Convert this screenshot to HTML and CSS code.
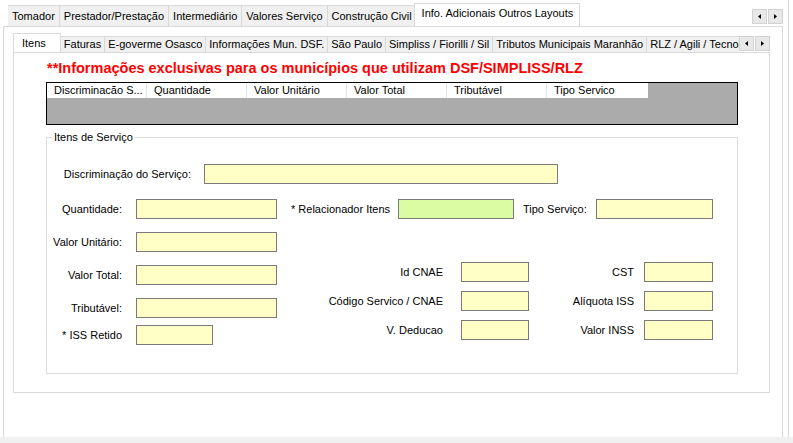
FILE: index.html
```html
<!DOCTYPE html>
<html lang="pt-BR">
<head>
  <meta charset="UTF-8">
  <title>Info. Adicionais Outros Layouts</title>
  <link rel="stylesheet" href="styles.css">
</head>
<body>
  <div class="window">
    <div class="tabbar outer-bar">
      <div class="tabs">
        <div class="tab">Tomador</div>
        <div class="tab">Prestador/Prestação</div>
        <div class="tab">Intermediário</div>
        <div class="tab">Valores Serviço</div>
        <div class="tab">Construção Civil</div>
        <div class="tab active">Info. Adicionais Outros Layouts</div>
      </div>
      <div class="scroller">
        <span class="arrow"><svg width="3" height="5" viewBox="0 0 3 5"><path d="M3 0V5L0 2.5Z" fill="#000"/></svg></span>
        <span class="arrow"><svg width="3" height="5" viewBox="0 0 3 5"><path d="M0 0V5L3 2.5Z" fill="#000"/></svg></span>
      </div>
    </div>

    <div class="outer-page">
      <div class="tabbar inner-bar">
        <div class="tabs">
          <div class="tab active">Itens</div>
          <div class="tab">Faturas</div>
          <div class="tab">E-goverme Osasco</div>
          <div class="tab">Informações Mun. DSF.</div>
          <div class="tab">São Paulo</div>
          <div class="tab">Simpliss / Fiorilli / Sil</div>
          <div class="tab">Tributos Municipais Maranhão</div>
          <div class="tab">RLZ / Agili / Tecnos</div>
        </div>
        <div class="scroller">
          <span class="arrow"><svg width="3" height="5" viewBox="0 0 3 5"><path d="M3 0V5L0 2.5Z" fill="#000"/></svg></span>
          <span class="arrow"><svg width="3" height="5" viewBox="0 0 3 5"><path d="M0 0V5L3 2.5Z" fill="#000"/></svg></span>
        </div>
      </div>

      <div class="inner-page">
        <div class="notice">**Informações exclusivas para os municípios que utilizam DSF/SIMPLISS/RLZ</div>

        <div class="grid">
          <div class="grid-head">
            <div class="cell">Discriminacão S...</div>
            <div class="cell">Quantidade</div>
            <div class="cell">Valor Unitário</div>
            <div class="cell">Valor Total</div>
            <div class="cell">Tributável</div>
            <div class="cell">Tipo Servico</div>
          </div>
        </div>

        <fieldset class="group">
          <legend>Itens de Serviço</legend>

          <div class="field row-discrim">
            <label class="lbl-discrim">Discriminação do Serviço:</label>
            <input class="in-discrim" type="text">
          </div>

          <div class="row-two">
            <div class="field">
              <label class="lbl-left">Quantidade:</label>
              <input class="in-left" type="text">
            </div>
            <div class="field">
              <label class="lbl-rel">* Relacionador Itens</label>
              <input class="in-rel" type="text">
            </div>
            <div class="field">
              <label class="lbl-tipo">Tipo Serviço:</label>
              <input class="in-tipo" type="text">
            </div>
          </div>

          <div class="cols">
            <div class="col col-left">
              <div class="field">
                <label class="lbl-left">Valor Unitário:</label>
                <input class="in-left" type="text">
              </div>
              <div class="field">
                <label class="lbl-left">Valor Total:</label>
                <input class="in-left" type="text">
              </div>
              <div class="field">
                <label class="lbl-left">Tributável:</label>
                <input class="in-left" type="text">
              </div>
              <div class="field iss">
                <label class="lbl-left">* ISS Retido</label>
                <input class="in-small" type="text">
              </div>
            </div>

            <div class="col col-mid">
              <div class="field">
                <label class="lbl-mid">Id CNAE</label>
                <input class="in-mid" type="text">
              </div>
              <div class="field">
                <label class="lbl-mid">Código Servico / CNAE</label>
                <input class="in-mid" type="text">
              </div>
              <div class="field">
                <label class="lbl-mid">V. Deducao</label>
                <input class="in-mid" type="text">
              </div>
            </div>

            <div class="col col-right">
              <div class="field">
                <label class="lbl-right">CST</label>
                <input class="in-right" type="text">
              </div>
              <div class="field">
                <label class="lbl-right">Alíquota ISS</label>
                <input class="in-right" type="text">
              </div>
              <div class="field">
                <label class="lbl-right">Valor INSS</label>
                <input class="in-right" type="text">
              </div>
            </div>
          </div>
        </fieldset>
      </div>
    </div>
  </div>
</body>
</html>
```

FILE: styles.css
```css
* {
  box-sizing: border-box;
}
body {
  margin: 0;
  background: #f0f0f0;
  font-family: "Liberation Sans", Arial, sans-serif;
  font-size: 11px;
  color: #000;
}
.window {
  height: 437px;
  padding: 3px 0 0 3px;
  background: linear-gradient(to right, #fff 788px, #dadada 788px, #dadada 789px, #fff 789px);
}

/* tab strips */
.tabbar {
  display: flex;
  align-items: flex-end;
}
.tabs {
  display: flex;
  align-items: flex-end;
  flex: 1;
  overflow: hidden;
  height: 100%;
}
.tab {
  border: 1px solid #d9d9d9;
  border-bottom: 0;
  background: #f0f0f0;
  margin-left: -1px;
  white-space: nowrap;
  flex-shrink: 0;
}
.tab.active {
  background: #fff;
  position: relative;
  z-index: 1;
  margin-bottom: -1px;
}
.outer-bar {
  width: 780px;
  height: 23px;
  padding-left: 5px;
}
.outer-bar .tab {
  height: 21px;
  padding: 4px 4px 0;
}
.outer-bar .tab.active {
  height: 24px;
  padding: 3px 6px 0 7px;
  margin-left: -3px;
  margin-right: -2px;
}
.scroller {
  display: flex;
  flex-shrink: 0;
}
.arrow {
  width: 15px;
  height: 15px;
  display: flex;
  align-items: center;
  justify-content: center;
  background: #e8e8e8;
  border: 1px solid #d2d2d2;
}
.arrow + .arrow {
  margin-left: 1px;
}
.outer-bar .scroller {
  align-self: center;
  margin-top: 3px;
}

.outer-page {
  width: 780px;
  height: 411px;
  border: 1px solid #d9d9d9;
  border-bottom: 0;
  background: #fff;
  padding: 6px 0 0 9px;
}
.inner-bar {
  width: 757px;
  height: 19px;
}
.inner-bar .tab {
  height: 16px;
  padding: 1px 3px 0;
}
.inner-bar .tab.active {
  height: 20px;
  padding: 3px 14px 0 8px;
  margin-left: 0;
}
.inner-bar .scroller {
  margin-bottom: 1px;
}

.inner-page {
  width: 757px;
  height: 341px;
  border: 1px solid #d9d9d9;
  padding: 6px 0 0 32px;
}

.notice {
  color: #f00;
  font-weight: bold;
  font-size: 14.5px;
  line-height: 18px;
  margin-left: 1px;
}

.grid {
  width: 692px;
  height: 43px;
  margin-top: 5px;
  border: 1px solid #000;
  background: #ababab;
}
.grid-head {
  display: flex;
  width: 601px;
  height: 15px;
  background: #fff;
}
.cell {
  width: 100px;
  padding-left: 7px;
  line-height: 15px;
  border-right: 1px solid #e3e3e3;
  white-space: nowrap;
  overflow: hidden;
}
.cell:last-child {
  width: 101px;
  border-right: 0;
}

.group {
  width: 692px;
  height: 244px;
  margin: 5px 0 0;
  padding: 20px 0 0;
  border: 1px solid #dcdcdc;
}
.group legend {
  margin-left: 5px;
  padding: 0 2px;
  line-height: 14px;
}

.field {
  display: flex;
  align-items: center;
}
.field label {
  text-align: right;
  white-space: nowrap;
}
.field input {
  height: 20px;
  margin: 0;
  padding: 0 2px;
  border: 1px solid #7a7a7a;
  background: #ffffc6;
  font: inherit;
}

.lbl-discrim { width: 144px; margin-right: 13px; }
.in-discrim { width: 354px; }

.row-two {
  display: flex;
  margin-top: 15px;
}
.lbl-left { width: 75px; margin-right: 14px; }
.in-left { width: 141px; }
.in-small { width: 77px; }
.lbl-rel { width: 96px; margin: 0 11px 0 14px; }
.field input.in-rel { width: 116px; background: #dcfca4; }
.lbl-tipo { width: 60px; margin: 0 13px 0 9px; }
.in-tipo { width: 117px; }

.cols {
  display: flex;
  align-items: flex-start;
  margin-top: 13px;
}
.col {
  display: flex;
  flex-direction: column;
}
.col-left .field + .field { margin-top: 13px; }
.col-left .field.iss { margin-top: 7px; }
.col-mid {
  margin-left: 23px;
  padding-top: 30px;
  gap: 9px;
}
.col-right {
  margin-left: 31px;
  padding-top: 30px;
  gap: 9px;
}
.lbl-mid { width: 143px; margin-right: 18px; }
.in-mid { width: 68px; }
.lbl-right { width: 74px; margin-right: 10px; }
.in-right { width: 69px; }
```
